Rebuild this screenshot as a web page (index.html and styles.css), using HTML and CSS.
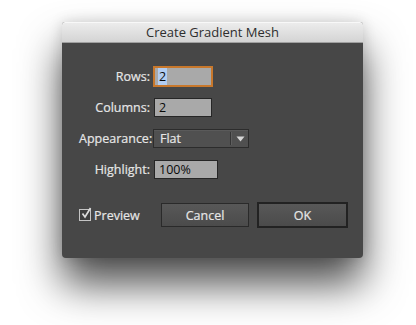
FILE: index.html
```html
<!DOCTYPE html>
<html>
<head>
<meta charset="utf-8">
<link rel="stylesheet" href="styles.css">
</head>
<body>
<div class="dialog">
  <div class="titlebar">Create Gradient Mesh</div>
  <div class="content">
    <div class="form">
      <div class="row">
        <span class="label">Rows:</span>
        <span class="field field-sm focused"><span class="sel">2</span></span>
      </div>
      <div class="row">
        <span class="label">Columns:</span>
        <span class="field field-sm">2</span>
      </div>
      <div class="row">
        <span class="label">Appearance:</span>
        <span class="select">
          <span class="select-value">Flat</span>
          <span class="select-arrow">
            <svg width="9" height="6" viewBox="0 0 9 6"><path d="M0.5 0.5 H8.5 L4.5 5.5 Z" fill="#d6d6d6"/></svg>
          </span>
        </span>
      </div>
      <div class="row">
        <span class="label">Highlight:</span>
        <span class="field field-md">100%</span>
      </div>
    </div>
    <div class="actions">
      <label class="check">
        <span class="box">
          <svg width="12" height="13" viewBox="0 0 12 13"><path d="M2.5 6.5 L5 10 L10.5 1" fill="none" stroke="#dcdcdc" stroke-width="1.7"/></svg>
        </span>
        <span class="check-label">Preview</span>
      </label>
      <div class="buttons">
        <button class="btn">Cancel</button>
        <button class="btn btn-default">OK</button>
      </div>
    </div>
  </div>
</div>
</body>
</html>
```

FILE: styles.css
```css
html, body {
  margin: 0;
  padding: 0;
  background: #ffffff;
}
body {
  width: 416px;
  height: 325px;
  overflow: hidden;
  font-family: "Open Sans", "Liberation Sans", sans-serif;
}
.dialog {
  margin: 22px 0 0 62px;
  width: 301px;
  border-radius: 3px 3px 4px 4px;
  box-shadow: 0 26px 42px rgba(0,0,0,0.7), 0 0 14px rgba(0,0,0,0.15);
  background: #474747;
}
.titlebar {
  height: 21px;
  box-sizing: border-box;
  background: linear-gradient(#ececec, #d4d4d4);
  border-top: 1px solid #f8f8f8;
  border-bottom: 1px solid #a0a0a0;
  border-radius: 3px 3px 0 0;
  color: #2e2e2e;
  font-size: 13px;
  line-height: 19px;
  text-align: center;
}
.content {
  height: 215px;
  box-sizing: border-box;
  padding: 24px 15px 0 17px;
  display: flex;
  flex-direction: column;
  border-radius: 0 0 4px 4px;
}
.form {
  display: flex;
  flex-direction: column;
  gap: 12px;
}
.row {
  display: flex;
  align-items: center;
  height: 19px;
}
.label {
  width: 71px;
  text-align: right;
  color: #e6e6e6;
  font-size: 12.5px;
  margin-right: 4px;
  -webkit-text-stroke: 0.2px #e6e6e6;
}
.field {
  box-sizing: border-box;
  height: 19px;
  background: #a9a9a9;
  border: 1px solid #262626;
  color: #0a0a0a;
  font-size: 12.5px;
  line-height: 17px;
  padding-left: 4px;
}
.field-sm { width: 58px; }
.field-md { width: 64px; }
.focused {
  border-color: #c8782c;
  box-shadow: 0 0 0 1px #c8782c;
}
.sel {
  background: #b2cdf2;
  padding: 0 1px;
  margin-left: -1px;
}
.select {
  box-sizing: border-box;
  width: 96px;
  height: 19px;
  margin-left: -1px;
  display: flex;
  background: #505050;
  border: 1px solid #2c2c2c;
  box-shadow: inset 0 1px 0 rgba(255,255,255,0.06);
}
.select-value {
  flex: 1;
  color: #e6e6e6;
  font-size: 12.5px;
  padding-left: 6px;
  border-right: 1px solid #353535;
  margin: 2px 0;
  line-height: 13px;
  -webkit-text-stroke: 0.2px #e6e6e6;
}
.select-arrow {
  width: 16px;
  display: flex;
  align-items: center;
  justify-content: center;
  border-left: 1px solid #5e5e5e;
  margin: 2px 0;
}
.actions {
  margin-top: 23px;
  display: flex;
  align-items: center;
  height: 26px;
}
.check {
  display: flex;
  align-items: center;
  width: 82px;
}
.box {
  box-sizing: border-box;
  width: 12px;
  height: 12px;
  border: 1px solid #c4c4c4;
  background: #3e3e3e;
  display: flex;
  position: relative;
}
.box svg {
  position: absolute;
  left: 0;
  top: -3px;
}
.check-label {
  color: #e6e6e6;
  font-size: 12.5px;
  margin-left: 3px;
  -webkit-text-stroke: 0.2px #e6e6e6;
}
.buttons {
  display: flex;
  align-items: center;
  gap: 8px;
}
.btn {
  box-sizing: border-box;
  height: 24px;
  width: 88px;
  background: linear-gradient(#585858, #4b4b4b);
  border: 1px solid #2a2a2a;
  color: #e6e6e6;
  font-family: "Open Sans", "Liberation Sans", sans-serif;
  font-size: 12.5px;
  padding: 0;
  -webkit-text-stroke: 0.2px #e6e6e6;
}
.btn-default {
  width: 91px;
  height: 26px;
  border: 2px solid #222222;
}
```
